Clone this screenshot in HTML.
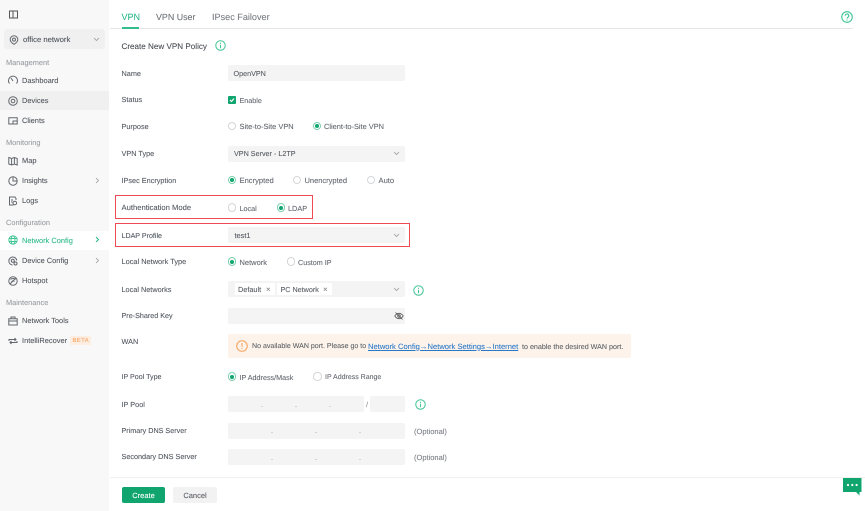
<!DOCTYPE html>
<html><head><meta charset="utf-8"><style>
html,body{margin:0;padding:0;background:#fff}
#p{position:relative;width:865px;height:511px;overflow:hidden;background:#fff;font-family:"Liberation Sans",sans-serif;font-size:7.2px;color:#555a60;text-rendering:geometricPrecision}
#p div,#p svg{position:absolute}
.t{white-space:nowrap;line-height:12px;height:12px;margin-top:-5.300px;filter:blur(.3px);-webkit-text-stroke:.08px currentColor}
.l{left:121.500px;color:#50565e;font-size:7.300px}
.o{color:#62676e}
.h{color:#999ca0;font-size:7.400px}
.f{left:228px;width:177px;height:16px;margin-top:-8px;background:#f4f4f4;border-radius:2px}
.n{left:22px;color:#51565c;font-size:7.450px}
.r{width:8.500px;height:8.500px;margin:-4.250px 0 0 -4.250px;border:.7px solid #d4d6d8;border-radius:50%;background:#fff;box-sizing:border-box}
.r.c{border:.8px solid #7fd0b0}
.r.c:after{content:"";position:absolute;left:1.500px;top:1.500px;width:4px;height:4px;border-radius:50%;background:#10a56f}
.i{width:10px;height:10px;margin:-5px 0 0 -5px;fill:none;stroke:#62676d;stroke-width:1;filter:blur(.2px)}
.g{width:11px;height:11px;margin:-5.500px 0 0 -5.500px;fill:none;stroke:#3fc494;stroke-width:.9}
.ch{width:7px;height:5px;margin:-2.500px 0 0 -3.500px;fill:none;stroke:#9a9da1;stroke-width:.8}
.s{width:5px;height:7px;margin:-3.500px 0 0 -2.500px;fill:none;stroke:#9a9da1;stroke-width:.8}
.d{color:#777;margin-top:-5.500px;line-height:12px;height:12px}
.red{border:1.400px solid #ee4a54;box-sizing:border-box;filter:blur(.2px)}
.tag{background:#fff;height:12px;top:283px;border-radius:1px}
</style></head><body><div id="p">

<!-- sidebar -->
<div style="left:0;top:0;width:109px;height:511px;background:#f8f8f8"></div>
<div style="left:0;top:91px;width:109px;height:19px;background:#f0f0f0"></div>
<div style="left:0;top:231px;width:109px;height:19px;background:#fff"></div>
<div style="left:4px;top:29px;width:101px;height:20px;background:#f0f0f0;border-radius:3px"></div>

<svg class="i" style="left:13.500px;top:14px;width:9px;height:9px;margin:-4.500px 0 0 -4.500px;stroke:#555" viewBox="0 0 9 9"><rect x=".5" y="1" width="8" height="7" /><path d="M4 1v7"/></svg>
<svg class="i" style="left:13.500px;top:39.500px" viewBox="0 0 10 10"><path d="M5 .8a3.800 3.800 0 0 1 3.800 3.800C8.800 7 5 9.300 5 9.300S1.200 7 1.200 4.600A3.800 3.800 0 0 1 5 .8z"/><circle cx="5" cy="4.600" r="1.500"/></svg>
<div class="t" style="left:23px;top:39.500px;color:#4e5359;font-size:7.700px">office network</div>
<svg class="ch" style="left:96px;top:39.500px" viewBox="0 0 7 5"><path d="M1 1l2.500 2.500L6 1"/></svg>

<div class="t h" style="left:6px;top:62.500px">Management</div>
<svg class="i" style="left:13px;top:80px" viewBox="0 0 10 10"><path d="M1.500 8.500A4.500 4.500 0 1 1 8.500 8.500M5 6L3 3"/></svg>
<div class="t n" style="top:80px">Dashboard</div>
<svg class="i" style="left:13px;top:100.500px" viewBox="0 0 10 10"><circle cx="5" cy="5" r="4.300"/><circle cx="5" cy="5" r="1.800"/></svg>
<div class="t n" style="top:100.500px">Devices</div>
<svg class="i" style="left:13px;top:120.500px" viewBox="0 0 10 10"><path d="M.8 8V1.800h8.400V8z"/><path d="M5 8V5h4"/></svg>
<div class="t n" style="top:120.500px">Clients</div>

<div class="t h" style="left:6px;top:142.500px">Monitoring</div>
<svg class="i" style="left:13px;top:160.500px" viewBox="0 0 10 10"><path d="M.8 1.500l2.800 1 2.800-1 2.800 1v6.500l-2.800-1-2.800 1-2.800-1zM3.600 2.500v6.500M6.400 1.500V8"/></svg>
<div class="t n" style="top:160.500px">Map</div>
<svg class="i" style="left:13px;top:180.500px" viewBox="0 0 10 10"><circle cx="5" cy="5" r="4.200"/><path d="M5 .8V5h4.200"/></svg>
<div class="t n" style="top:180.500px">Insights</div>
<svg class="s" style="left:97px;top:180px" viewBox="0 0 5 7"><path d="M1 1l2.500 2.500L1 6"/></svg>
<svg class="i" style="left:13px;top:200.500px" viewBox="0 0 10 10"><path d="M5.500 9H1.500V1h5.500l1 1.500V4"/><circle cx="6.800" cy="7" r="1.800"/><path d="M3 4h2M3 6h1.500"/></svg>
<div class="t n" style="top:200.500px">Logs</div>

<div class="t h" style="left:6px;top:222.500px">Configuration</div>
<svg class="g" style="left:13px;top:240px;width:10px;height:10px;margin:-5px 0 0 -5px" viewBox="0 0 10 10"><circle cx="5" cy="5" r="4.200"/><ellipse cx="5" cy="5" rx="2" ry="4.200"/><path d="M1 3.500h8M1 6.500h8"/></svg>
<div class="t n" style="top:240px;color:#2eb888">Network Config</div>
<svg class="s" style="left:97px;top:239.500px;stroke:#2eb888;stroke-width:1" viewBox="0 0 5 7"><path d="M1 1l2.500 2.500L1 6"/></svg>
<svg class="i" style="left:13px;top:260.500px" viewBox="0 0 10 10"><path d="M8.800 4.500A4 4 0 1 0 4.500 9"/><circle cx="4.800" cy="4.800" r="1.500"/><circle cx="7.500" cy="7.500" r="1.500"/></svg>
<div class="t n" style="top:260.500px">Device Config</div>
<svg class="s" style="left:97px;top:260px" viewBox="0 0 5 7"><path d="M1 1l2.500 2.500L1 6"/></svg>
<svg class="i" style="left:13px;top:280.500px" viewBox="0 0 10 10"><circle cx="5" cy="5" r="4.200"/><path d="M2.500 3.500a3.500 3.500 0 0 1 5 0M3.500 5.500a2 2 0 0 1 3 0M2 8l6-6"/></svg>
<div class="t n" style="top:280.500px">Hotspot</div>

<div class="t h" style="left:6px;top:302.500px">Maintenance</div>
<svg class="i" style="left:13px;top:320.500px" viewBox="0 0 10 10"><path d="M.8 2.800h8.400V9H.8zM3 2.800V1h4v1.800M.8 5h8.400"/></svg>
<div class="t n" style="top:320.500px">Network Tools</div>
<svg class="i" style="left:13px;top:340.500px" viewBox="0 0 10 10"><path d="M1 5V3.500h7M6.500 2L8 3.500 6.500 5M9 5v1.500H2M3.500 8L2 6.500 3.500 5"/></svg>
<div class="t n" style="top:340.500px">IntelliRecover</div>
<div style="left:69.500px;top:336px;width:21px;height:9px;background:#fdeee2;border-radius:1px"></div>
<div class="t" style="left:72.500px;top:340px;font-size:6px;color:#f4a468;letter-spacing:.3px">BETA</div>

<!-- tabs -->
<div style="left:110px;top:27.500px;width:743px;height:1px;background:#e6e6e6"></div>
<div style="left:121.500px;top:27px;width:17.500px;height:1.500px;background:#33bd8c"></div>
<div class="t" style="left:121.500px;top:16.500px;font-size:9px;color:#2eb888">VPN</div>
<div class="t" style="left:156px;top:16.500px;font-size:8.900px;color:#6b7075">VPN User</div>
<div class="t" style="left:212px;top:16.500px;font-size:9.100px;color:#777b80">IPsec Failover</div>
<svg class="g" style="left:847px;top:17px;width:12px;height:12px;margin:-6px 0 0 -6px" viewBox="0 0 10 10"><circle cx="5" cy="5" r="4.400"/><path d="M3.500 4a1.500 1.500 0 1 1 2.200 1.300C5.200 5.600 5 5.900 5 6.400M5 7.200v.8"/></svg>

<div class="t" style="left:121.500px;top:46px;font-size:8.100px;color:#464b51">Create New VPN Policy</div>
<svg class="g" style="left:220.500px;top:45.500px" viewBox="0 0 10 10"><circle cx="5" cy="5" r="4.300"/><path d="M5 4.300V7.500M5 2.500v1"/></svg>

<!-- labels -->
<div class="t l" style="top:73px">Name</div>
<div class="t l" style="top:99.500px">Status</div>
<div class="t l" style="top:126px">Purpose</div>
<div class="t l" style="top:153.500px">VPN Type</div>
<div class="t l" style="top:180px">IPsec Encryption</div>
<div class="t l" style="top:207.500px;font-size:7.650px">Authentication Mode</div>
<div class="t l" style="top:235px;font-size:7.100px">LDAP Profile</div>
<div class="t l" style="top:261.500px;font-size:7.400px">Local Network Type</div>
<div class="t l" style="top:289px">Local Networks</div>
<div class="t l" style="top:315.500px;font-size:7.200px">Pre-Shared Key</div>
<div class="t l" style="top:341px">WAN</div>
<div class="t l" style="top:376.500px;font-size:7.100px">IP Pool Type</div>
<div class="t l" style="top:404px">IP Pool</div>
<div class="t l" style="top:430px;font-size:7.200px">Primary DNS Server</div>
<div class="t l" style="top:456.500px;font-size:7.250px">Secondary DNS Server</div>

<!-- Name / status -->
<div class="f" style="top:73px"></div>
<div class="t" style="left:233.500px;top:73px;font-size:7.200px">OpenVPN</div>
<div style="left:228px;top:95.500px;width:8px;height:8px;background:#10a56f;border-radius:1px"></div>
<svg style="left:229px;top:96.500px;width:6px;height:6px;fill:none;stroke:#fff;stroke-width:1.100" viewBox="0 0 6 6"><path d="M1 3l1.500 1.500L5 1.500"/></svg>
<div class="t o" style="left:239.500px;top:100px">Enable</div>

<!-- purpose -->
<div class="r" style="left:232px;top:126px"></div>
<div class="t o" style="left:239.500px;top:126.500px;font-size:7.450px">Site-to-Site VPN</div>
<div class="r c" style="left:317px;top:126px"></div>
<div class="t o" style="left:324px;top:126.500px;font-size:7.400px">Client-to-Site VPN</div>

<!-- vpn type -->
<div class="f" style="top:154px"></div>
<div class="t" style="left:234px;top:153.500px;font-size:7.200px">VPN Server - L2TP</div>
<svg class="ch" style="left:396px;top:153.500px" viewBox="0 0 7 5"><path d="M1 1l2.500 2.500L6 1"/></svg>

<!-- ipsec -->
<div class="r c" style="left:232px;top:180px"></div>
<div class="t o" style="left:239.500px;top:180.500px;font-size:7.600px">Encrypted</div>
<div class="r" style="left:297px;top:180px"></div>
<div class="t o" style="left:304.500px;top:180.500px;font-size:7.500px">Unencrypted</div>
<div class="r" style="left:371px;top:180px"></div>
<div class="t o" style="left:378.500px;top:180.500px;font-size:7.600px">Auto</div>

<!-- auth -->
<div class="red" style="left:115px;top:194.500px;width:198px;height:24px"></div>
<div class="r" style="left:232px;top:207.500px"></div>
<div class="t o" style="left:239.500px;top:208px">Local</div>
<div class="r c" style="left:281px;top:207.500px"></div>
<div class="t o" style="left:288px;top:208px;font-size:7.300px">LDAP</div>

<!-- ldap profile -->
<div class="red" style="left:114.500px;top:222.500px;width:295px;height:24.500px"></div>
<div class="f" style="top:235px"></div>
<div class="t" style="left:234.500px;top:235px;font-size:7.400px">test1</div>
<svg class="ch" style="left:396px;top:235px" viewBox="0 0 7 5"><path d="M1 1l2.500 2.500L6 1"/></svg>

<!-- local net type -->
<div class="r c" style="left:232px;top:261.500px"></div>
<div class="t o" style="left:239.500px;top:262px;font-size:7.500px">Network</div>
<div class="r" style="left:291px;top:261.500px"></div>
<div class="t o" style="left:298px;top:262px;font-size:7.200px">Custom IP</div>

<!-- local networks -->
<div class="f" style="top:289px"></div>
<div class="tag" style="left:234.500px;width:40.500px"></div>
<div class="t" style="left:238px;top:289px;font-size:7.300px">Default</div>
<div class="t" style="left:266px;top:289px;color:#888;font-size:8px">×</div>
<div class="tag" style="left:277px;width:55px"></div>
<div class="t" style="left:280.500px;top:289px;font-size:7.200px">PC Network</div>
<div class="t" style="left:323px;top:289px;color:#888;font-size:8px">×</div>
<svg class="ch" style="left:396px;top:289px" viewBox="0 0 7 5"><path d="M1 1l2.500 2.500L6 1"/></svg>
<svg class="g" style="left:418.500px;top:290px" viewBox="0 0 10 10"><circle cx="5" cy="5" r="4.300"/><path d="M5 4.300V7.500M5 2.500v1"/></svg>

<!-- psk -->
<div class="f" style="top:316px"></div>
<svg class="i" style="left:398.500px;top:315.500px;stroke:#555;stroke-width:.8" viewBox="0 0 10 10"><path d="M.8 5S2.500 2.300 5 2.300 9.200 5 9.200 5 7.500 7.700 5 7.700.8 5 .8 5z"/><circle cx="5" cy="5" r="1.300"/><path d="M1.500 1.500l7 7"/></svg>

<!-- WAN -->
<div style="left:228px;top:334px;width:403px;height:24px;background:#fdf3eb;border-radius:2px"></div>
<svg class="i" style="left:242px;top:346px;width:12px;height:12px;margin:-6px 0 0 -6px;stroke:#f5a560" viewBox="0 0 11 11"><circle cx="5.500" cy="5.500" r="4.800"/><path d="M5.500 2.800v3.400M5.500 7.200v1"/></svg>
<div class="t" style="left:252px;top:346px;color:#5c6065;font-size:7.050px">No available WAN port. Please go to</div>
<div class="t" style="left:368px;top:346px;color:#2a78c8;font-size:7.600px;text-decoration:underline">Network Config→Network Settings→Internet</div>
<div class="t" style="left:522px;top:346px;color:#5c6065;font-size:7.150px">to enable the desired WAN port.</div>

<!-- ip pool type -->
<div class="r c" style="left:232px;top:376.500px"></div>
<div class="t o" style="left:239.500px;top:377px;font-size:7.200px">IP Address/Mask</div>
<div class="r" style="left:317.500px;top:376.500px"></div>
<div class="t o" style="left:325px;top:377px;font-size:7px">IP Address Range</div>

<!-- ip pool -->
<div class="f" style="top:404px;width:136px"></div>
<div class="d" style="left:261px;top:404px">.</div>
<div class="d" style="left:295px;top:404px">.</div>
<div class="d" style="left:329px;top:404px">.</div>
<div class="d" style="left:366px;top:404px">/</div>
<div class="f" style="top:404px;left:370px;width:35px"></div>
<svg class="g" style="left:420px;top:404.500px" viewBox="0 0 10 10"><circle cx="5" cy="5" r="4.300"/><path d="M5 4.300V7.500M5 2.500v1"/></svg>

<!-- dns -->
<div class="f" style="top:430.500px"></div>
<div class="d" style="left:271px;top:430.500px">.</div>
<div class="d" style="left:315px;top:430.500px">.</div>
<div class="d" style="left:359px;top:430.500px">.</div>
<div class="t" style="left:414px;top:431px;color:#7a7e83;font-size:7.500px">(Optional)</div>
<div class="f" style="top:457px"></div>
<div class="d" style="left:271px;top:457px">.</div>
<div class="d" style="left:315px;top:457px">.</div>
<div class="d" style="left:359px;top:457px">.</div>
<div class="t" style="left:414px;top:457px;color:#7a7e83;font-size:7.500px">(Optional)</div>

<!-- footer -->
<div style="left:110px;top:477px;width:755px;height:1px;background:#f1f1f1"></div>
<div style="left:122px;top:487px;width:43px;height:16px;background:#10a56f;border-radius:2px"></div>
<div class="t" style="left:122px;width:43px;text-align:center;top:495px;color:#fff;font-size:7.500px">Create</div>
<div style="left:173px;top:487px;width:44px;height:16px;background:#f2f2f2;border-radius:2px"></div>
<div class="t" style="left:173px;width:44px;text-align:center;top:495px;color:#5c6065;font-size:7.500px">Cancel</div>

<!-- chat -->
<svg style="left:843px;top:478px;width:19px;height:18px" viewBox="0 0 19 18"><path d="M0 0h18.500v14h-2v3.500l-3.500-3.500H0z" fill="#10a56f"/><circle cx="5" cy="7" r="1.100" fill="#fff"/><circle cx="9.300" cy="7" r="1.100" fill="#fff"/><circle cx="13.600" cy="7" r="1.100" fill="#fff"/></svg>
</div></body></html>
